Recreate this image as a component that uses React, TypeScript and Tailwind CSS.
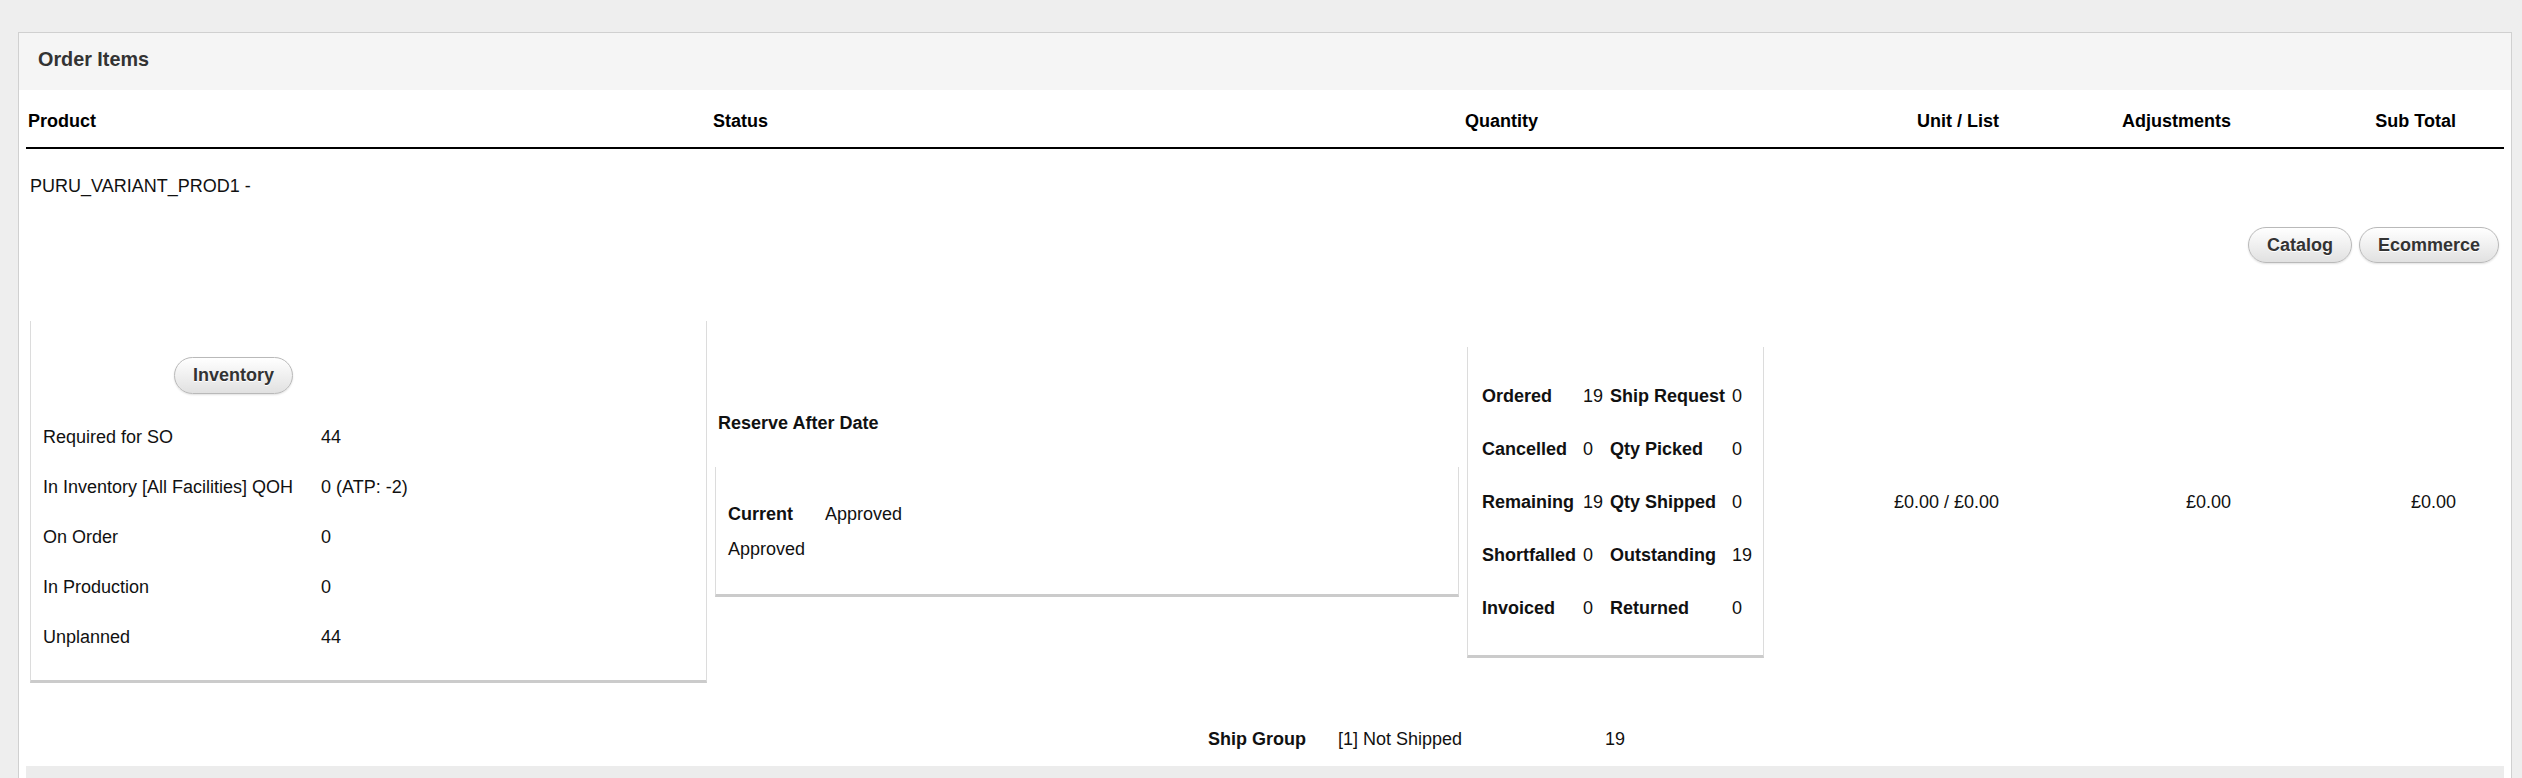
import React from 'react';

// ── Shared bits ──────────────────────────────────────────────────────────────

const cols = 'grid grid-cols-[685px_752px_304px_236px_232px_225px_44px]';

const pill =
  'h-[36px] px-[18px] rounded-full border border-[#b9b9b9] bg-linear-to-b from-white to-[#e1e1e1] font-bold text-[#333] [text-shadow:0_1px_0_#fff] shadow-[0_1px_2px_rgba(0,0,0,0.12)]';

const box = 'bg-white border-x border-[#dcdcdc] border-b-[3px] border-b-[#cbcbcb]';

const inventory = [
  { label: 'Required for SO', value: '44' },
  { label: 'In Inventory [All Facilities] QOH', value: '0 (ATP: -2)' },
  { label: 'On Order', value: '0' },
  { label: 'In Production', value: '0' },
  { label: 'Unplanned', value: '44' },
];

const quantities = [
  ['Ordered', '19', 'Ship Request', '0'],
  ['Cancelled', '0', 'Qty Picked', '0'],
  ['Remaining', '19', 'Qty Shipped', '0'],
  ['Shortfalled', '0', 'Outstanding', '19'],
  ['Invoiced', '0', 'Returned', '0'],
];

// ── Cells ────────────────────────────────────────────────────────────────────

function InventoryBox() {
  return (
    <div className={`${box} mx-[4px] h-[362px] pt-[36px] pl-[12px]`}>
      <button type="button" className={`${pill} h-[37px] ml-[131px]`}>
        Inventory
      </button>
      <div className="mt-[18px] grid grid-cols-[278px_auto] auto-rows-[50px] items-center">
        {inventory.map((r) => (
          <React.Fragment key={r.label}>
            <span>{r.label}</span>
            <span>{r.value}</span>
          </React.Fragment>
        ))}
      </div>
    </div>
  );
}

function StatusCell() {
  return (
    <div className="px-[4px] pt-[5px]">
      <p className="pl-[3px] font-bold">Reserve After Date</p>
      <div className={`${box} mt-[33px] h-[130px] pt-[37px] pl-[12px]`}>
        <div className="grid grid-cols-[97px_auto] w-fit">
          <span className="font-bold">Current</span>
          <span>Approved</span>
        </div>
        <p className="mt-[14px]">Approved</p>
      </div>
    </div>
  );
}

function QuantityBox() {
  return (
    <div className={`${box} ml-[4px] w-[297px] h-[311px] pt-[23px] pl-[14px]`}>
      <div className="grid grid-cols-[auto_auto_auto_auto] gap-x-[7px] auto-rows-[53px] items-center w-fit">
        {quantities.map((q) => (
          <React.Fragment key={q[0]}>
            <span className="font-bold">{q[0]}</span>
            <span>{q[1]}</span>
            <span className="font-bold">{q[2]}</span>
            <span>{q[3]}</span>
          </React.Fragment>
        ))}
      </div>
    </div>
  );
}

// ── Root ─────────────────────────────────────────────────────────────────────

export default function App() {
  return (
    <div className="h-[778px] overflow-hidden bg-[#eeeeee] pt-[32px] pl-[18px] pr-[10px] font-['Liberation_Sans',Arial,sans-serif] text-[18px] leading-[21px] text-[#111]">
      <div className="border border-[#d0d0d0] bg-white">
        <div className="h-[57px] bg-[#f5f5f5] flex items-center pl-[19px] pb-[5px] text-[19.8px] font-bold text-[#333]">
          Order Items
        </div>

        <div className="px-[7px]">
          {/* Column headers */}
          <div className={`${cols} h-[59px] items-center pt-[6px] border-b-2 border-black font-bold text-black`}>
            <span className="pl-[2px]">Product</span>
            <span className="pl-[2px]">Status</span>
            <span className="pl-[2px]">Quantity</span>
            <span className="text-right pr-[4px]">Unit / List</span>
            <span className="text-right pr-[4px]">Adjustments</span>
            <span className="text-right pr-[4px]">Sub Total</span>
            <span />
          </div>

          <p className="pt-[27px] pl-[4px]">PURU_VARIANT_PROD1 -</p>

          <div className="mt-[30px] flex justify-end gap-[7px] pr-[5px]">
            <button type="button" className={pill}>Catalog</button>
            <button type="button" className={pill}>Ecommerce</button>
          </div>

          {/* Item row */}
          <div className={`${cols} mt-[58px] items-center`}>
            <InventoryBox />
            <StatusCell />
            <QuantityBox />
            <span className="text-right pr-[4px]">£0.00 / £0.00</span>
            <span className="text-right pr-[4px]">£0.00</span>
            <span className="text-right pr-[4px]">£0.00</span>
            <span />
          </div>

          {/* Ship group */}
          <div className={`${cols} pt-[46px]`}>
            <span />
            <div className="flex justify-end gap-[32px] pr-[1px]">
              <span className="font-bold">Ship Group</span>
              <span>[1] Not Shipped</span>
            </div>
            <span className="text-center">19</span>
          </div>

          <div className="mt-[16px] h-[60px] bg-[#ececec]" />
        </div>
      </div>
    </div>
  );
}
